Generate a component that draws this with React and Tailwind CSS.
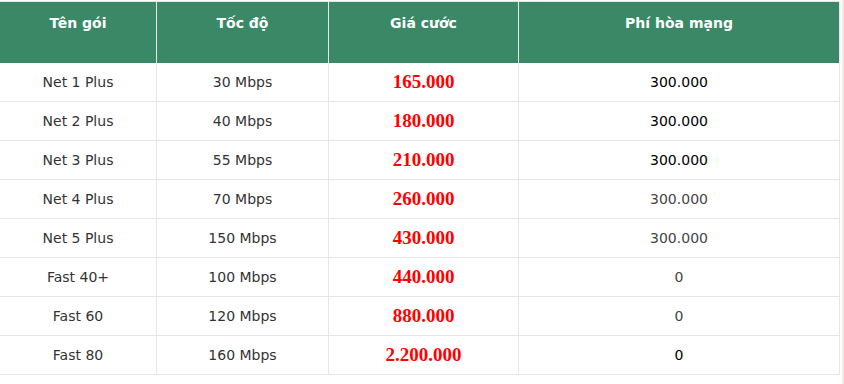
import React from "react";

const rows = [
  ["Net 1 Plus", "30 Mbps", "165.000", "300.000", "text-black"],
  ["Net 2 Plus", "40 Mbps", "180.000", "300.000", "text-black"],
  ["Net 3 Plus", "55 Mbps", "210.000", "300.000", "text-black"],
  ["Net 4 Plus", "70 Mbps", "260.000", "300.000", "text-[#444]"],
  ["Net 5 Plus", "150 Mbps", "430.000", "300.000", "text-[#444]"],
  ["Fast 40+", "100 Mbps", "440.000", "0", "text-[#444]"],
  ["Fast 60", "120 Mbps", "880.000", "0", "text-[#444]"],
  ["Fast 80", "160 Mbps", "2.200.000", "0", "text-black"],
];

export default function App() {
  return (
    <div className="flex w-[844px] h-[384px] bg-white" style={{ fontFamily: '"DejaVu Sans", Verdana, sans-serif' }}>
      <div className="w-[840px] pt-px">
        <div className="border-t border-[#e6e6e6]">
          <div className="flex h-[61px] bg-[#3a8866] text-white font-bold text-[14px] leading-5">
            <div className="w-[157px] border-r border-[#e8e8e8] pt-[11px] text-center">Tên gói</div>
            <div className="w-[172px] border-r border-[#e8e8e8] pt-[11px] text-center">Tốc độ</div>
            <div className="w-[190px] border-r border-[#e8e8e8] pt-[11px] text-center">Giá cước</div>
            <div className="w-[321px] border-r border-[#e8e8e8] pt-[11px] text-center">Phí hòa mạng</div>
          </div>
          {rows.map((r, i) => (
            <div key={i} className="flex h-[39px] border-b border-[#e6e6e6] text-[14px] text-[#333]">
              <div className="w-[157px] border-r border-[#e6e6e6] flex items-center justify-center pt-px">{r[0]}</div>
              <div className="w-[172px] border-r border-[#e6e6e6] flex items-center justify-center pt-px">{r[1]}</div>
              <div
                className="w-[190px] border-r border-[#e6e6e6] flex items-center justify-center text-[#ff0000] font-bold text-[19px] pt-px"
                style={{ fontFamily: '"Liberation Serif", "Times New Roman", serif' }}
              >
                {r[2]}
              </div>
              <div className={`w-[321px] border-r border-[#e6e6e6] flex items-center justify-center pt-px ${r[4]}`}>{r[3]}</div>
            </div>
          ))}
        </div>
      </div>
      <div className="w-[2px] bg-white" />
      <div className="w-[2px] bg-[#f3eee0]" />
    </div>
  );
}
